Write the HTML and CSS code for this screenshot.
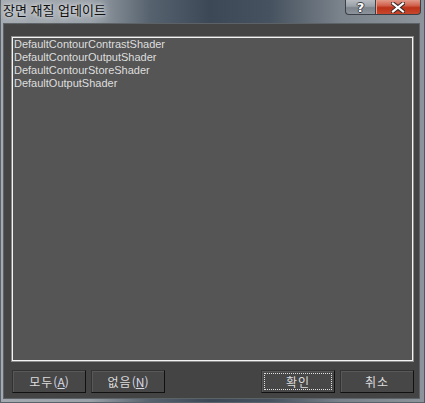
FILE: index.html
```html
<!DOCTYPE html>
<html lang="ko">
<head>
<meta charset="utf-8">
<link rel="stylesheet" href="styles.css">
</head>
<body>
<div class="window">
  <div class="titlebar">
    <span class="title">장면 재질 업데이트</span>
    <div class="caption">
      <div class="cap-btn help"><span class="qmark">?</span></div>
      <div class="cap-btn close">
        <svg width="14" height="11" viewBox="0 0 14 11"><path d="M2 1.5 L12 9.5 M12 1.5 L2 9.5" stroke="#3a2a28" stroke-width="4.2" stroke-linecap="square"/><path d="M2 1.5 L12 9.5 M12 1.5 L2 9.5" stroke="#ffffff" stroke-width="2.2" stroke-linecap="square"/></svg>
      </div>
    </div>
  </div>
  <div class="client">
    <div class="list">
      <div class="item">DefaultContourContrastShader</div>
      <div class="item">DefaultContourOutputShader</div>
      <div class="item">DefaultContourStoreShader</div>
      <div class="item">DefaultOutputShader</div>
    </div>
    <div class="buttons">
      <div class="group">
        <div class="btn">모두<span class="acc">(<u>A</u>)</span></div>
        <div class="btn">없음<span class="acc">(<u>N</u>)</span></div>
      </div>
      <div class="group">
        <div class="btn focus"><span class="focus-ring">확인</span></div>
        <div class="btn">취소</div>
      </div>
    </div>
  </div>
</div>
</body>
</html>
```

FILE: styles.css
```css
html, body {
  margin: 0;
  padding: 0;
  background: #6f7780;
}
.window {
  width: 425px;
  height: 403px;
  box-sizing: border-box;
  display: flex;
  flex-direction: column;
  background: linear-gradient(90deg, #a4aab0 0px, #9aa1a8 90px, #56626e 150px, #3c4856 210px, #46525f 270px, #7a828b 340px, #8d949b 425px);
  padding: 0 5px 4px 3px;
  box-shadow: inset 1px 0 0 #5b636c, inset -1px 0 0 #4a5a6e, inset 0 -1px 0 #59616a;
}
.titlebar {
  height: 23px;
  flex: none;
  display: flex;
  align-items: flex-start;
  justify-content: space-between;
  position: relative;
}
.title {
  font-family: "Noto Sans CJK KR", sans-serif;
  font-size: 13px;
  line-height: 18px;
  letter-spacing: 0;
  color: #101010;
  margin-top: 1px;
  margin-left: 0;
  text-shadow: 0 0 6px #d4d8dc, 0 0 10px #c8cdd2, 0 0 3px #dfe2e5;
}
.caption {
  display: flex;
  margin-right: -1px;
}
.cap-btn {
  height: 15px;
  box-sizing: border-box;
  display: flex;
  align-items: center;
  justify-content: center;
  border: 1px solid #3b4048;
  border-top: none;
}
.help {
  width: 30px;
  border-radius: 0 0 0 4px;
  border-right: none;
  background: linear-gradient(180deg, #b7bcc2 0%, #9aa0a7 45%, #7d848c 55%, #8d939a 100%);
}
.close {
  width: 46px;
  border-radius: 0 0 4px 0;
  background: linear-gradient(180deg, #e29a8a 0%, #d0604c 40%, #bb3218 55%, #c8482c 100%);
  box-shadow: inset 1px 0 0 #e6a090;
}
.qmark {
  font-family: "DejaVu Sans", sans-serif;
  font-weight: bold;
  font-size: 13px;
  line-height: 13px;
  color: #ffffff;
  text-shadow: 1px 0 0 #3a3e44, -1px 0 0 #3a3e44, 0 1px 0 #3a3e44, 0 -1px 0 #3a3e44;
}
.client {
  flex: 1;
  background: #444444;
  border: 1px solid #5d6266;
  display: flex;
  flex-direction: column;
  padding: 12px 5px 5px 7px;
}
.list {
  height: 326px;
  box-sizing: border-box;
  background: #555555;
  border: 1px solid #8c8c8c;
  box-shadow: inset 0 0 0 1px #f4f4f4;
  padding: 1px 2px;
}
.item {
  font-family: "Liberation Sans", Arial, sans-serif;
  font-size: 11px;
  line-height: 13px;
  color: #dedede;
  white-space: nowrap;
}
.buttons {
  margin-top: 8px;
  display: flex;
  justify-content: space-between;
  padding-left: 1px;
}
.group {
  display: flex;
  gap: 5px;
}
.btn {
  width: 74px;
  height: 23px;
  box-sizing: border-box;
  background: #474747;
  border: 1px solid #333333;
  border-right-color: #111111;
  border-bottom-color: #111111;
  box-shadow: inset 1px 1px 0 #585858;
  display: flex;
  align-items: center;
  justify-content: center;
  font-family: "Noto Sans CJK KR", sans-serif;
  font-size: 12px;
  color: #dcdcdc;
  letter-spacing: 1px;
}
.acc {
  letter-spacing: 0;
  color: #d6dbe6;
}
.acc u {
  text-decoration-thickness: 1px;
  text-underline-offset: 1px;
}
.btn.focus {
  padding: 2px;
}
.focus-ring {
  flex: 1;
  align-self: stretch;
  display: flex;
  align-items: center;
  justify-content: center;
  border: 1px dotted #e0e0e0;
}
```
